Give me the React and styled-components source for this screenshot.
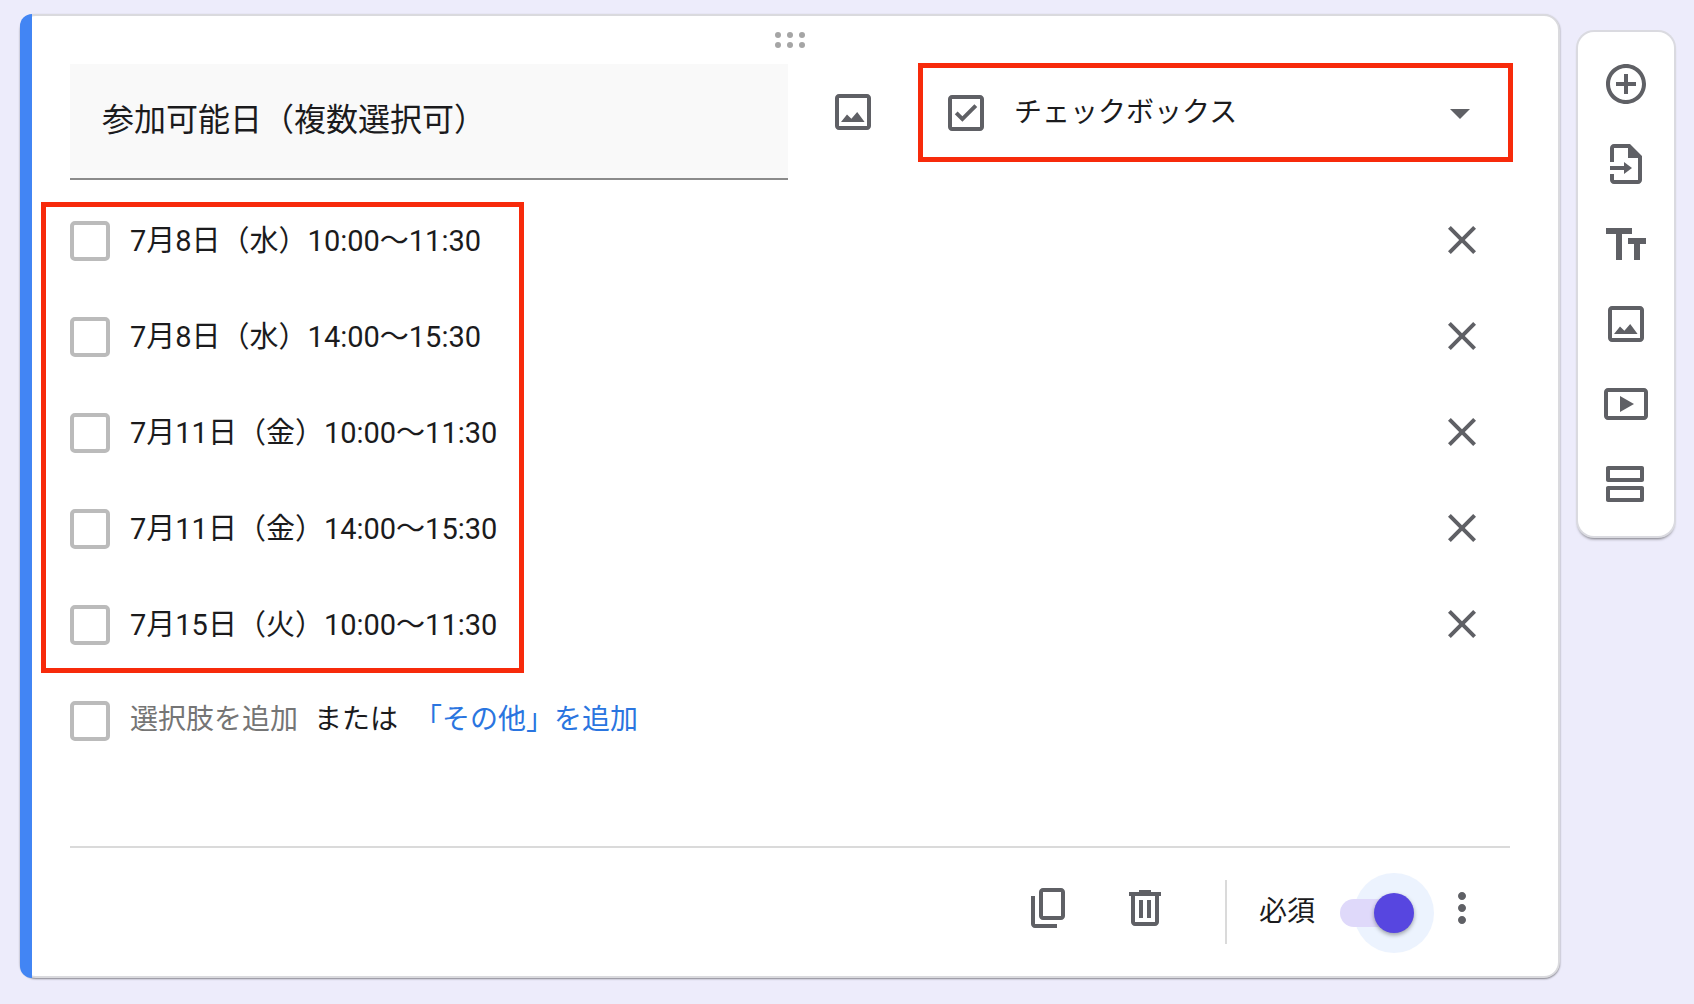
import React, { useState } from "react";
import styled, { createGlobalStyle } from "styled-components";

const initialOptions = [
  { id: 1, label: "7月8日（水）10:00〜11:30" },
  { id: 2, label: "7月8日（水）14:00〜15:30" },
  { id: 3, label: "7月11日（金）10:00〜11:30" },
  { id: 4, label: "7月11日（金）14:00〜15:30" },
  { id: 5, label: "7月15日（火）10:00〜11:30" },
];

const icons = {
  image:
    "M19 5v14H5V5h14m0-2H5c-1.1 0-2 .9-2 2v14c0 1.1.9 2 2 2h14c1.1 0 2-.9 2-2V5c0-1.1-.9-2-2-2zM14.1 12l-2.9 3.4L9 13.2 6 17h11.8z",
  checkbox:
    "M19 3H5c-1.1 0-2 .9-2 2v14c0 1.1.9 2 2 2h14c1.1 0 2-.9 2-2V5c0-1.1-.9-2-2-2zm0 16H5V5h14v14zM17.6 9l-1.4-1.4-6 6-2.4-2.4-1.4 1.4 3.8 3.8z",
  arrowDown: "M7 10l5 5 5-5z",
  close:
    "M19 6.41L17.59 5 12 10.59 6.41 5 5 6.41 10.59 12 5 17.59 6.41 19 12 13.41 17.59 19 19 17.59 13.41 12z",
  copy:
    "M18 2H9c-1.1 0-2 .9-2 2v12c0 1.1.9 2 2 2h9c1.1 0 2-.9 2-2V4c0-1.1-.9-2-2-2zm0 14H9V4h9v12zM3 6v14c0 1.1.9 2 2 2h11v-2H5V6H3z",
  trash:
    "M15 4V3H9v1H4v2h1v13c0 1.1.9 2 2 2h10c1.1 0 2-.9 2-2V6h1V4h-5zm2 15H7V6h10v13zM9 8h2v9H9zm4 0h2v9h-2z",
  more:
    "M12 8c1.1 0 2-.9 2-2s-.9-2-2-2-2 .9-2 2 .9 2 2 2zm0 2c-1.1 0-2 .9-2 2s.9 2 2 2 2-.9 2-2-.9-2-2-2zm0 6c-1.1 0-2 .9-2 2s.9 2 2 2 2-.9 2-2-.9-2-2-2z",
  add:
    "M13 7h-2v4H7v2h4v4h2v-4h4v-2h-4V7zm-1-5C6.48 2 2 6.48 2 12s4.48 10 10 10 10-4.48 10-10S17.52 2 12 2zm0 18c-4.41 0-8-3.59-8-8s3.59-8 8-8 8 3.59 8 8-3.59 8-8 8z",
  importFile:
    "M14 2H6c-1.1 0-2 .9-2 2v7h2V4h7v5h5v11H6v-3H4v3c0 1.1.9 2 2 2h12c1.1 0 2-.9 2-2V8l-6-6zM4 13v2h7v2l4-3-4-3v2z",
  title: "M2 4v3h5v13h3V7h5V4H2zm20 5h-9v3h3v8h3v-8h3V9z",
  video:
    "M21 4H3c-1.1 0-2 .9-2 2v12c0 1.1.9 2 2 2h18c1.1 0 2-.9 2-2V6c0-1.1-.9-2-2-2zm0 14H3V6h18v12zM9 8v8l7-4z",
  section:
    "M19 5v4H4V5h15m1-2H3c-.55 0-1 .45-1 1v6c0 .55.45 1 1 1h17c.55 0 1-.45 1-1V4c0-.55-.45-1-1-1zm-1 12v4H4v-4h15m1-2H3c-.55 0-1 .45-1 1v6c0 .55.45 1 1 1h17c.55 0 1-.45 1-1v-6c0-.55-.45-1-1-1z",
};

const tools = [
  { icon: "add", label: "質問を追加" },
  { icon: "importFile", label: "質問をインポート" },
  { icon: "title", label: "タイトルと説明を追加" },
  { icon: "image", label: "画像を追加" },
  { icon: "video", label: "動画を追加" },
  { icon: "section", label: "セクションを追加" },
];

function Icon({ name }) {
  return (
    <IconSvg viewBox="0 0 24 24" aria-hidden="true">
      <path d={icons[name]} />
    </IconSvg>
  );
}

function App() {
  const [title, setTitle] = useState("参加可能日（複数選択可）");
  const [type, setType] = useState("checkbox");
  const [options, setOptions] = useState(initialOptions);
  const [required, setRequired] = useState(true);

  const addOption = (label) => {
    setOptions([...options, { id: Date.now(), label }]);
  };

  const removeOption = (id) => {
    setOptions(options.filter((option) => option.id !== id));
  };

  return (
    <>
      <GlobalStyle />
      <Page>
        <Card>
          <DragHandle>
            <svg width="30" height="16" viewBox="0 0 30 16" aria-hidden="true">
              {[3, 15, 27].map((x) => (
                <React.Fragment key={x}>
                  <circle cx={x} cy="3" r="3" />
                  <circle cx={x} cy="13" r="3" />
                </React.Fragment>
              ))}
            </svg>
          </DragHandle>

          <QuestionHeader>
            <TitleInput
              aria-label="質問"
              value={title}
              onChange={(e) => setTitle(e.target.value)}
            />
            <IconButton type="button" aria-label="画像を追加">
              <Icon name="image" />
            </IconButton>
            <TypeBox>
              <Icon name="checkbox" />
              <TypeSelect
                aria-label="質問の形式"
                value={type}
                onChange={(e) => setType(e.target.value)}
              >
                <option value="checkbox">チェックボックス</option>
                <option value="radio">ラジオボタン</option>
                <option value="dropdown">プルダウン</option>
              </TypeSelect>
              <Icon name="arrowDown" />
            </TypeBox>
          </QuestionHeader>

          <OptionList>
            {options.map((option) => (
              <OptionRow key={option.id}>
                <OptionLabel>
                  <Checkbox type="checkbox" />
                  {option.label}
                </OptionLabel>
                <IconButton
                  type="button"
                  aria-label="選択肢を削除"
                  onClick={() => removeOption(option.id)}
                >
                  <Icon name="close" />
                </IconButton>
              </OptionRow>
            ))}
            <Highlight />
          </OptionList>

          <AddRow>
            <Checkbox type="checkbox" aria-label="新しい選択肢" />
            <AddActions>
              <TextButton
                type="button"
                $color="#757575"
                onClick={() => addOption("選択肢")}
              >
                選択肢を追加
              </TextButton>
              <span>または</span>
              <TextButton
                type="button"
                $color="#2a75e0"
                onClick={() => addOption("その他")}
              >
                「その他」を追加
              </TextButton>
            </AddActions>
          </AddRow>

          <CardFooter>
            <FooterIcons>
              <IconButton type="button" aria-label="コピーを作成">
                <Icon name="copy" />
              </IconButton>
              <IconButton type="button" aria-label="削除">
                <Icon name="trash" />
              </IconButton>
            </FooterIcons>
            <Required>
              必須
              <Switch
                type="checkbox"
                role="switch"
                checked={required}
                onChange={(e) => setRequired(e.target.checked)}
              />
            </Required>
            <FooterIcons>
              <IconButton type="button" aria-label="その他のオプション">
                <Icon name="more" />
              </IconButton>
            </FooterIcons>
          </CardFooter>
        </Card>

        <Toolbar>
          {tools.map((tool) => (
            <IconButton key={tool.icon} type="button" aria-label={tool.label}>
              <Icon name={tool.icon} />
            </IconButton>
          ))}
        </Toolbar>
      </Page>
    </>
  );
}

export default App;

const GlobalStyle = createGlobalStyle`
  * {
    box-sizing: border-box;
  }
  body {
    margin: 0;
    background: #edecfb;
    color: #1b1b1d;
    font-family: Roboto, "Noto Sans CJK JP", sans-serif;
    font-size: 28px;
    line-height: 40px;
  }
  button, input, select {
    margin: 0;
    font: inherit;
    color: inherit;
  }
`;

const Page = styled.main`
  display: flex;
  align-items: flex-start;
  gap: 18px;
  padding: 14px 20px 26px;
`;

const Card = styled.section`
  position: relative;
  flex: 1;
  min-width: 0;
  padding: 0 48px;
  background: #fff;
  border: 2px solid #dadade;
  border-radius: 16px;
  box-shadow: 0 1px 2px rgba(0, 0, 0, 0.45);

  /* bar that marks the question being edited */
  &::before {
    content: "";
    position: absolute;
    top: -2px;
    bottom: -2px;
    left: -2px;
    width: 12px;
    background: #4285f4;
    border-radius: 12px 0 0 12px;
  }
`;

const DragHandle = styled.div`
  display: flex;
  align-items: center;
  justify-content: center;
  height: 48px;
  fill: #a5a5a5;
  cursor: move;
`;

const IconSvg = styled.svg`
  display: block;
  flex: none;
  width: 48px;
  height: 48px;
  fill: #5f6065;
`;

const IconButton = styled.button`
  display: block;
  flex: none;
  padding: 0;
  border: 0;
  background: none;
  cursor: pointer;
`;

const QuestionHeader = styled.div`
  display: flex;
  align-items: flex-start;
  gap: 41px;

  > ${IconButton} {
    margin-top: 24px;
  }
`;

const TitleInput = styled.input`
  flex: 1;
  min-width: 0;
  height: 116px;
  padding: 0 32px 8px;
  border: 0;
  border-bottom: 2px solid #8b8b8b;
  border-radius: 0;
  outline: none;
  background: #f9f9f9;
  font-size: 32px;
`;

const TypeBox = styled.div`
  display: flex;
  align-items: center;
  width: 595px;
  height: 99px;
  margin: -1px -3px 0 0;
  padding: 0 24px 0 19px;
  border: 5px solid #f72a0b;
`;

const TypeSelect = styled.select`
  flex: 1;
  min-width: 0;
  padding: 0 0 0 24px;
  border: 0;
  outline: none;
  background: none;
  appearance: none;
`;

const OptionList = styled.div`
  position: relative;
  margin-top: 13px;
`;

const Highlight = styled.div`
  position: absolute;
  top: 9px;
  bottom: 0;
  left: -29px;
  width: 483px;
  border: 5px solid #f72a0b;
  pointer-events: none;
`;

const OptionRow = styled.div`
  display: flex;
  align-items: center;
  justify-content: space-between;
  height: 96px;
  padding-right: 24px;

  > ${IconButton} {
    margin-bottom: 2px;
  }
`;

const OptionLabel = styled.label`
  display: flex;
  align-items: center;
  gap: 20px;
  font-size: 29px;
`;

const Checkbox = styled.input`
  flex: none;
  width: 40px;
  height: 40px;
  border: 4px solid #bbb;
  border-radius: 5px;
  background: #fff;
  appearance: none;

  &:checked {
    background: #bbb;
  }
`;

const AddRow = styled.div`
  display: flex;
  align-items: center;
  gap: 20px;
  height: 96px;
`;

const AddActions = styled.div`
  display: flex;
  gap: 16px;
  padding-bottom: 2px;
`;

const TextButton = styled.button`
  padding: 0;
  border: 0;
  background: none;
  color: ${(props) => props.$color};
  cursor: pointer;
`;

const CardFooter = styled.div`
  display: flex;
  align-items: center;
  justify-content: flex-end;
  height: 130px;
  margin-top: 77px;
  padding-right: 24px;
  border-top: 2px solid #dadada;
`;

const FooterIcons = styled.div`
  display: flex;
  gap: 48px;
  padding-bottom: 8px;
`;

const Required = styled.label`
  display: flex;
  align-items: center;
  gap: 25px;
  height: 64px;
  margin: 0 26px 0 56px;
  padding-left: 32px;
  border-left: 2px solid #dadada;
`;

const Switch = styled.input`
  position: relative;
  width: 72px;
  height: 28px;
  margin-top: 2px;
  border-radius: 14px;
  background: #dfd9fa;
  appearance: none;
  cursor: pointer;
  z-index: 0;

  &::before,
  &::after {
    content: "";
    position: absolute;
    border-radius: 50%;
  }

  &::before {
    top: -26px;
    left: 14px;
    width: 80px;
    height: 80px;
    /* the halo must not tint the track, so the track is repainted over it */
    background:
      linear-gradient(#dfd9fa, #dfd9fa) 0 26px / 40px 28px no-repeat,
      #ecf3fe;
  }

  &::after {
    top: -6px;
    left: 34px;
    width: 40px;
    height: 40px;
    background: #5746e0;
    box-shadow: 0 2px 4px rgba(0, 0, 0, 0.35);
  }

  &:not(:checked)::before {
    display: none;
  }

  &:not(:checked)::after {
    left: 0;
    background: #fafafa;
  }
`;

const Toolbar = styled.nav`
  display: flex;
  flex-direction: column;
  align-items: center;
  gap: 32px;
  width: 96px;
  margin-top: 18px;
  padding: 28px 0;
  background: #fff;
  border-radius: 16px;
  box-shadow: 0 0 0 2px #dadae0, 0 3px 3px rgba(0, 0, 0, 0.5);
`;
